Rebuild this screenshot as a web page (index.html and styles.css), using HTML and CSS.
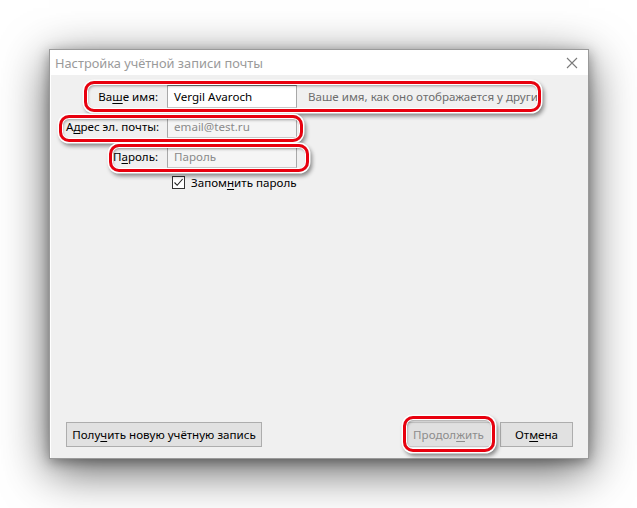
FILE: index.html
```html
<!DOCTYPE html>
<html lang="ru">
<head>
<meta charset="utf-8">
<title>Настройка учётной записи почты</title>
<link rel="stylesheet" href="styles.css">
</head>
<body>
<div class="dialog">
  <div class="titlebar">
    <span class="title">Настройка учётной записи почты</span>
    <svg class="close" width="12" height="12" viewBox="0 0 12 12"><path d="M1 1L11 11M11 1L1 11" stroke="#7a7a7a" stroke-width="1.1" fill="none"/></svg>
  </div>
  <div class="body">
    <div class="form">
      <label class="lbl">Ва<u>ш</u>е имя:</label>
      <div class="field filled">Vergil Avaroch</div>
      <div class="hint">Ваше имя, как оно отображается у других</div>

      <label class="lbl">А<u>д</u>рес эл. почты:</label>
      <div class="field">email@test.ru</div>
      <div></div>

      <label class="lbl">П<u>а</u>роль:</label>
      <div class="field">Пароль</div>
      <div></div>

      <div></div>
      <div class="check">
        <span class="box"><svg width="11" height="11" viewBox="0 0 11 11"><path d="M1.5 5.5L4.2 8.3L9.6 2" stroke="#222" stroke-width="1.1" fill="none"/></svg></span>
        <span>Запом<u>н</u>ить пароль</span>
      </div>
    </div>
    <div class="buttons">
      <button class="btn wide">Полу<u>ч</u>ить новую учётную запись</button>
      <div class="right">
        <button class="btn disabled">Продол<u>ж</u>ить</button>
        <button class="btn cancel">От<u>м</u>ена</button>
      </div>
    </div>
  </div>
  <div class="ring r1"></div>
  <div class="ring r2"></div>
  <div class="ring r3"></div>
  <div class="ring r4"></div>
</div>
</body>
</html>
```
FILE: styles.css
```css
html, body {
  margin: 0;
  padding: 0;
  background: #ffffff;
  width: 637px;
  height: 508px;
  overflow: hidden;
}
body {
  font-family: "Noto Sans", "Open Sans", sans-serif;
  font-size: 11.6px;
  color: #000;
}
u { text-decoration: underline; text-underline-offset: 2px; }
.dialog {
  position: relative;
  margin: 49px 0 0 49px;
  width: 540px;
  height: 410px;
  box-sizing: border-box;
  border: 1px solid #9a9a9a;
  background: #f0f0f0;
  box-shadow: 0 12px 44px rgba(0,0,0,0.62), 0 3px 12px rgba(0,0,0,0.35);
  display: flex;
  flex-direction: column;
}
.titlebar {
  height: 25px;
  background: #fff;
  display: flex;
  align-items: center;
  justify-content: space-between;
  padding: 0 10px 0 5px;
  flex: none;
}
.title {
  color: #9a9a9a;
  font-size: 12.8px;
}
.body {
  flex: 1;
  display: flex;
  flex-direction: column;
  justify-content: space-between;
  padding: 10px 15px 11px 15px;
  border-left: 1px solid #fff;
}
.form {
  display: grid;
  grid-template-columns: 92px 130px 232px;
  column-gap: 9px;
  row-gap: 7px;
  align-items: center;
}
.lbl {
  text-align: right;
  white-space: nowrap;
}
.field {
  height: 23px;
  box-sizing: border-box;
  background: #f5f5f5;
  border: 1px solid #a8a8a8;
  border-top-color: #c8c8c8;
  border-bottom-color: #c8c8c8;
  padding: 0 6px;
  line-height: 21px;
  color: #8a8a8a;
  white-space: nowrap;
  overflow: hidden;
}
.field.filled { color: #000; background: #fff; border-top-color: #7a7a7a; }
.hint {
  color: #6d6d6d;
  white-space: nowrap;
  overflow: hidden;
  padding-left: 2px;
}
.check {
  grid-column: 2 / 4;
  display: flex;
  align-items: center;
  gap: 6px;
  padding-left: 5px;
}
.box {
  width: 13px;
  height: 13px;
  box-sizing: border-box;
  border: 1px solid #333;
  background: #fff;
  display: flex;
  align-items: center;
  justify-content: center;
}
.buttons {
  display: flex;
  justify-content: space-between;
  align-items: center;
}
.right { display: flex; gap: 8px; }
.btn {
  font-family: inherit;
  font-size: 11.6px;
  height: 25px;
  background: #e1e1e1;
  border: 1px solid #adadad;
  padding: 0;
  color: #000;
  margin: 0;
  white-space: nowrap;
}
.btn.wide { width: 196px; }
.btn.disabled { color: #8d8d8d; width: 87px; background: #e0e0e0; border-color: #c8c8c8; }
.btn.cancel { width: 73px; }
.ring {
  position: absolute;
  box-sizing: border-box;
  border: 3px solid #e8000e;
  border-radius: 10px;
  box-shadow: 0 0 0 1.5px #fff, 2px 3px 4px 1px rgba(0,0,0,0.45), inset 0 0 0 1px #fff, inset 1px 2px 3px rgba(0,0,0,0.35);
  pointer-events: none;
}
.r1 { left: 34px; top: 31px; width: 457px; height: 31px; }
.r2 { left: 9px; top: 65px; width: 244px; height: 27px; }
.r3 { left: 59px; top: 94px; width: 200px; height: 28px; }
.r4 { left: 353px; top: 366px; width: 92px; height: 36px; }
```
